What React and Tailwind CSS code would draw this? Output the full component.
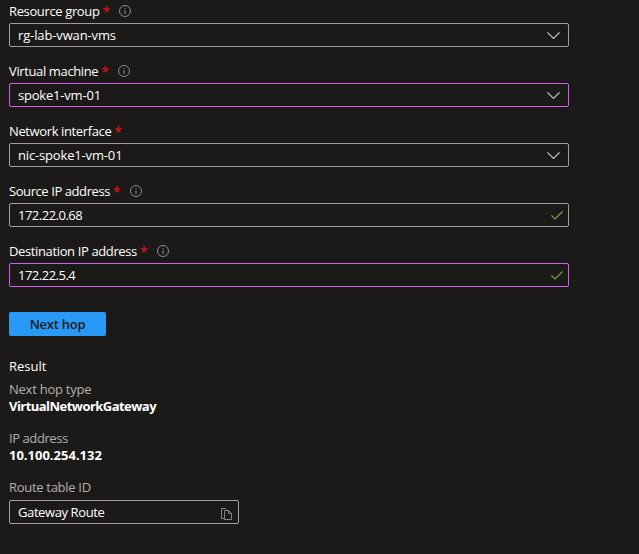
function Info() {
  return (
    <svg className="ml-[11px] size-3 shrink-0" viewBox="0 0 12 12" fill="none">
      <circle cx="6" cy="6" r="5.5" stroke="#8f8d8b" />
      <path d="M6 5v4M6 3v1" stroke="#8f8d8b" />
    </svg>
  );
}

function Chevron() {
  return (
    <svg className="mr-[2px] h-[7px] w-[13px]" viewBox="0 0 13 7" fill="none">
      <path d="M.4.4 6.5 6.4 12.6.4" stroke="#d2d0ce" strokeWidth="1.1" />
    </svg>
  );
}

function Check() {
  return (
    <svg className="-mr-px h-[9px] w-3" viewBox="0 0 12 9" fill="none">
      <path d="M.4 4.4 4 8 11.6.5" stroke="#7fa04c" strokeWidth="1.2" />
    </svg>
  );
}

function Copy() {
  return (
    <svg className="mt-[3px] h-3 w-[11px]" viewBox="0 0 11 12" fill="none" stroke="#868482">
      <path d="M3.5 10.5h-3V.5h4l1 1" />
      <path d="M3.5 2.5h4l3 3v6h-7zM7.5 2.5v3h3" />
    </svg>
  );
}

function Field({ label, labelClass, value, valueClass, info = true, active = false, icon }) {
  return (
    <div className="h-[60px]">
      <div className="flex h-[23px] items-center pb-[2px]">
        <span className={labelClass}>{label}</span>
        <span className="ml-[3px] mt-[2px] w-[6px] text-[14px] text-[#e81123]">*</span>
        {info && <Info />}
      </div>
      <div
        className={`flex h-6 w-[560px] items-center justify-between rounded-[2px] border pl-2 pr-[6px] ${
          active ? "border-[#d65ff0]" : "border-[#a19f9d]"
        }`}
      >
        <span className={valueClass}>{value}</span>
        {icon}
      </div>
    </div>
  );
}

export default function App() {
  return (
    <main className="h-[554px] w-[639px] overflow-hidden whitespace-nowrap bg-[#1b1a19] pl-[9px] font-['Open_Sans','Noto_Sans',sans-serif] text-[13px] leading-[18px] text-white">
      <Field label="Resource group" labelClass="tracking-[-0.37px]" value="rg-lab-vwan-vms" valueClass="tracking-[-0.13px]" icon={<Chevron />} />
      <Field label="Virtual machine" labelClass="tracking-[-0.37px]" value="spoke1-vm-01" valueClass="tracking-[-0.2px]" active icon={<Chevron />} />
      <Field label="Network interface" labelClass="tracking-[-0.38px]" value="nic-spoke1-vm-01" valueClass="tracking-[-0.16px]" info={false} icon={<Chevron />} />
      <Field label="Source IP address" labelClass="tracking-[-0.42px]" value="172.22.0.68" valueClass="tracking-[-0.5px]" icon={<Check />} />
      <Field label="Destination IP address" labelClass="tracking-[-0.37px]" value="172.22.5.4" valueClass="tracking-[-0.5px]" active icon={<Check />} />
      <button className="mt-3 flex h-6 w-[97px] items-center justify-center rounded-[2px] bg-[#2899f5] font-semibold tracking-[-0.25px] text-[#1b1a19]">
        Next hop
      </button>
      <h2 className="mt-[21px]">Result</h2>
      <div className="mt-[6px] leading-[17px]">
        <div className="tracking-[-0.25px] text-[#b3b0ad]">Next hop type</div>
        <div className="font-bold tracking-[-0.54px]">VirtualNetworkGateway</div>
      </div>
      <div className="mt-[15px] leading-[17px]">
        <div className="tracking-[-0.42px] text-[#b3b0ad]">IP address</div>
        <div className="font-bold">10.100.254.132</div>
      </div>
      <div className="mt-[15px] leading-[17px] tracking-[-0.3px] text-[#b3b0ad]">Route table ID</div>
      <div className="mt-[4px] flex h-6 w-[230px] items-center justify-between rounded-[2px] border border-[#a19f9d] pl-2 pr-[6px]">
        <span className="tracking-[-0.4px]">Gateway Route</span>
        <Copy />
      </div>
    </main>
  );
}
